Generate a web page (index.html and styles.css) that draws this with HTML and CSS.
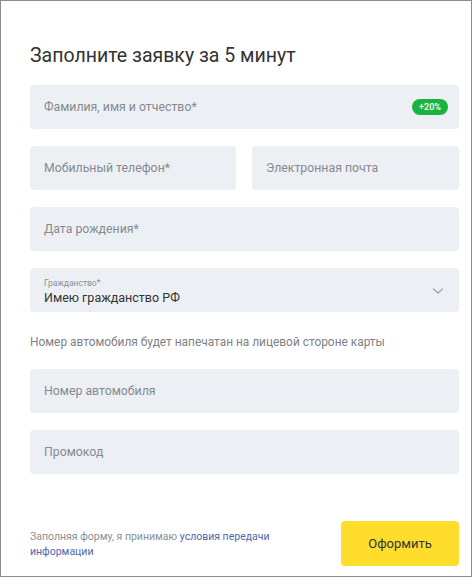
FILE: index.html
```html
<!DOCTYPE html>
<html lang="ru">
<head>
<meta charset="utf-8">
<link rel="stylesheet" href="styles.css">
</head>
<body>
<div class="card">
  <h1 class="title">Заполните заявку за 5 минут</h1>
  <div class="fields">
    <div class="field">
      <span class="ph">Фамилия, имя и отчество*</span>
      <span class="badge">+20%</span>
    </div>
    <div class="row">
      <div class="field"><span class="ph">Мобильный телефон*</span></div>
      <div class="field"><span class="ph">Электронная почта</span></div>
    </div>
    <div class="field"><span class="ph">Дата рождения*</span></div>
    <div class="field select">
      <div class="sel-text">
        <span class="sel-label">Гражданство*</span>
        <span class="sel-value">Имею гражданство РФ</span>
      </div>
      <svg class="chev" width="12" height="8" viewBox="0 0 12 8"><path d="M1.5 2 L6 6 L10.5 2" fill="none" stroke="#a0a6ae" stroke-width="1.4" stroke-linecap="round" stroke-linejoin="round"/></svg>
    </div>
  </div>
  <p class="note">Номер автомобиля будет напечатан на лицевой стороне карты</p>
  <div class="fields">
    <div class="field"><span class="ph">Номер автомобиля</span></div>
    <div class="field"><span class="ph">Промокод</span></div>
  </div>
  <div class="footer">
    <p class="consent"><span class="line">Заполняя форму, я принимаю <a class="link" href="#">условия передачи</a></span><span class="line"><a class="link" href="#">информации</a></span></p>
    <button class="submit">Оформить</button>
  </div>
</div>
</body>
</html>
```
FILE: styles.css
```css
* { box-sizing: border-box; }
html, body { margin: 0; padding: 0; background: #fff; }
body { font-family: Roboto, "Noto Sans", Arial, sans-serif; color: #333; }
.card {
  width: 472px;
  height: 577px;
  border: 1px solid #8c8c8c;
  padding: 0 12px 10px 29px;
  display: flex;
  flex-direction: column;
}
.title {
  margin: 41px 0 15px;
  font-size: 19.5px;
  line-height: 28px;
  font-weight: 400;
  color: #333;
}
.fields { display: flex; flex-direction: column; gap: 17px; }
.row { display: grid; grid-template-columns: 206px 207px; gap: 16px; }
.field {
  height: 44px;
  background: #ecf0f4;
  border-radius: 4px;
  padding: 0 14px;
  display: flex;
  align-items: center;
  justify-content: space-between;
}
.ph { font-size: 12.3px; color: #868a90; }
.badge {
  background: #1bb33f;
  color: #fff;
  font-size: 9px;
  font-weight: 500;
  height: 16px;
  width: 36px;
  border-radius: 8px;
  display: flex;
  align-items: center;
  justify-content: center;
  margin-right: -3px;
}
.sel-text { display: flex; flex-direction: column; padding-top: 3px; }
.sel-label { font-size: 8.5px; color: #8b8f95; line-height: 11px; }
.sel-value { font-size: 12.5px; color: #333; line-height: 17px; }
.chev { margin-right: 1px; margin-top: 2px; }
.note {
  margin: 22px 0 19px;
  font-size: 11.9px;
  line-height: 16px;
  color: #7e8186;
}
.footer {
  margin-top: auto;
  display: flex;
  justify-content: space-between;
  align-items: center;
}
.consent {
  margin: 0;
  width: 250px;
  font-size: 10.5px;
  line-height: 15px;
  color: #8b8e93;
  display: flex;
  flex-direction: column;
}
.link { color: #4b68ab; text-decoration: none; }
.submit {
  width: 118px;
  height: 45px;
  border: 0;
  border-radius: 4px;
  background: #ffdd2d;
  color: #333;
  font-family: inherit;
  font-size: 13px;
}
```
